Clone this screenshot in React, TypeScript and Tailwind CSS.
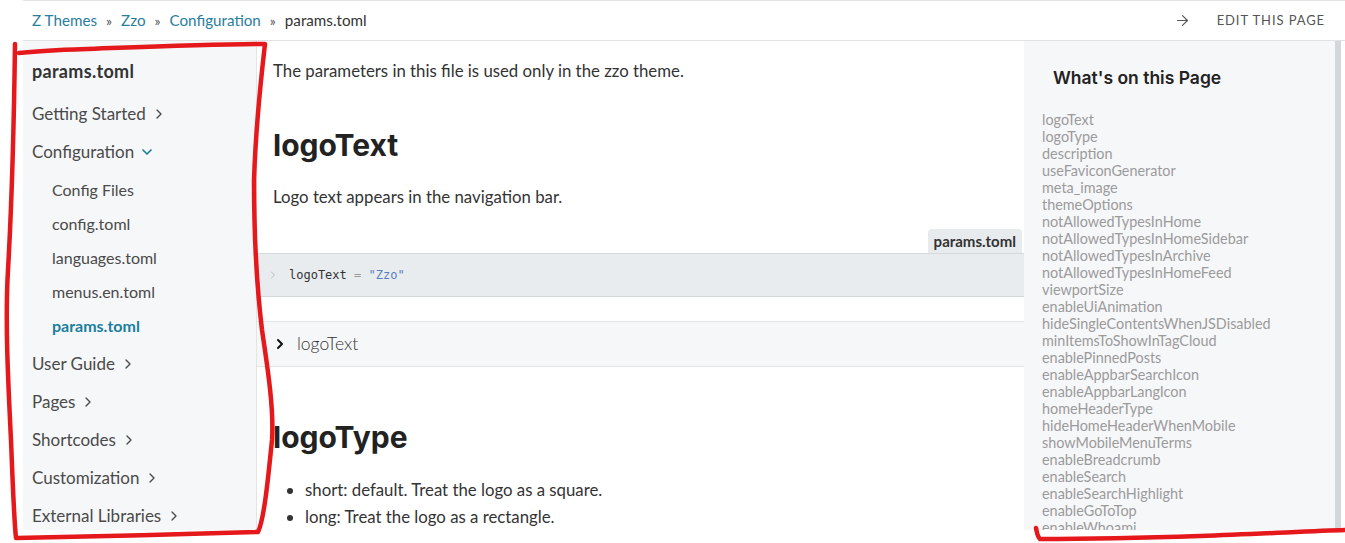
import { ArrowRight, ChevronDown, ChevronRight } from "lucide-react";

const tocItems = [
  "logoText",
  "logoType",
  "description",
  "useFaviconGenerator",
  "meta_image",
  "themeOptions",
  "notAllowedTypesInHome",
  "notAllowedTypesInHomeSidebar",
  "notAllowedTypesInArchive",
  "notAllowedTypesInHomeFeed",
  "viewportSize",
  "enableUiAnimation",
  "hideSingleContentsWhenJSDisabled",
  "minItemsToShowInTagCloud",
  "enablePinnedPosts",
  "enableAppbarSearchIcon",
  "enableAppbarLangIcon",
  "homeHeaderType",
  "hideHomeHeaderWhenMobile",
  "showMobileMenuTerms",
  "enableBreadcrumb",
  "enableSearch",
  "enableSearchHighlight",
  "enableGoToTop",
  "enableWhoami",
];

const configFiles = ["Config Files", "config.toml", "languages.toml", "menus.en.toml", "params.toml"];
const sections = ["User Guide", "Pages", "Shortcodes", "Customization", "External Libraries"];

function NavItem({ label }: { label: string }) {
  return (
    <div className="flex h-[38px] items-center gap-[5px] text-[17px] text-[#4a4a4a]">
      <span>{label}</span>
      <ChevronRight className="h-4 w-4" strokeWidth={2} />
    </div>
  );
}

export default function App() {
  return (
    <div className="relative h-[543px] w-[1345px] overflow-hidden bg-white font-['Lato',sans-serif] text-[#333]">
      <header className="ml-[23px] flex h-[41px] items-center justify-between border-y border-[#e2e2e2] pl-[9px] pr-[20px]">
        <nav className="flex items-center gap-[9px] text-[15.2px]">
          <span className="text-[#2a7d9c]">Z Themes</span>
          <span className="text-[14px] text-[#555]">»</span>
          <span className="text-[#2a7d9c]">Zzo</span>
          <span className="text-[14px] text-[#555]">»</span>
          <span className="text-[#2a7d9c]">Configuration</span>
          <span className="text-[14px] text-[#555]">»</span>
          <span className="text-[#333]">params.toml</span>
        </nav>
        <div className="flex items-center gap-[26px] text-[#555]">
          <ArrowRight className="h-[17px] w-[17px]" strokeWidth={1.6} />
          <span className="text-[13px] uppercase tracking-[0.07em]">Edit this page</span>
        </div>
      </header>

      <div className="ml-[23px] flex h-[489px]">
        <aside className="w-[234px] shrink-0 border-r border-[#e4e4e4] bg-[#f6f7f9] pl-[9px]">
          <div className="h-[54px] pt-[17px] text-[18px] font-bold tracking-[0.3px] text-[#333]">params.toml</div>
          <NavItem label="Getting Started" />
          <div className="flex h-[38px] items-center gap-[5px] text-[17px] text-[#4a4a4a]">
            <span>Configuration</span>
            <ChevronDown className="h-4 w-4 text-[#1a7f9c]" strokeWidth={2.5} />
          </div>
          <div className="my-[2px] pl-[20px]">
            {configFiles.map((file) => (
              <div
                key={file}
                className={
                  file === "params.toml"
                    ? "flex h-[34px] items-center text-[16px] font-bold text-[#1a7f9c]"
                    : "flex h-[34px] items-center text-[16px] text-[#4a4a4a]"
                }
              >
                {file}
              </div>
            ))}
          </div>
          {sections.map((s) => (
            <NavItem key={s} label={s} />
          ))}
        </aside>

        <main className="w-[767px] shrink-0 overflow-hidden">
          <p className="mt-[18px] pl-[16px] text-[16.8px] leading-6">The parameters in this file is used only in the zzo theme.</p>
          <h2 className="mt-[44px] pl-[16px] font-['Inter',sans-serif] text-[30px] font-bold leading-9 text-[#222]">logoText</h2>
          <p className="mt-[22px] pl-[16px] text-[16.8px] leading-6">Logo text appears in the navigation bar.</p>
          <div className="mt-[20px] flex justify-end pr-[2px]">
            <div className="flex h-[24px] items-center rounded-t-sm bg-[#e8ebee] px-[6px] text-[15px] font-bold text-[#333]">params.toml</div>
          </div>
          <div className="flex h-[44px] items-center gap-[10px] border-y border-[#d6d9dc] bg-[#e9ecef] pl-[10px] font-['DejaVu_Sans_Mono',monospace] text-[12px]">
            <ChevronRight className="h-3 w-3 text-[#aaa]" strokeWidth={1.5} />
            <span className="text-[#333]">
              logoText <span className="text-[#999]">=</span> <span className="text-[#5b7fc4]">"Zzo"</span>
            </span>
          </div>
          <div className="mt-[24px] flex h-[46px] items-center gap-[9px] border-y border-[#e2e4e6] bg-[#f6f7f9] pl-[15px] text-[17.5px] font-light text-[#333]">
            <ChevronRight className="h-4 w-4 text-[#111]" strokeWidth={3} />
            <span>logoText</span>
          </div>
          <h2 className="mt-[52px] pl-[16px] font-['Inter',sans-serif] text-[30px] font-bold leading-9 text-[#222]">logoType</h2>
          <ul className="mt-[23px] list-disc space-y-[3px] pl-[48px] text-[16.8px] leading-6 marker:text-[#333]">
            <li>short: default. Treat the logo as a square.</li>
            <li>long: Treat the logo as a rectangle.</li>
          </ul>
        </main>

        <aside className="w-[311px] shrink-0 overflow-hidden bg-[#f6f7f9]">
          <h3 className="pl-[29px] pt-[25px] font-['Inter',sans-serif] text-[17.5px] font-semibold leading-6 text-[#222]">What's on this Page</h3>
          <ul className="mt-[21px] pl-[18px] text-[14.4px] leading-[17px] text-[#9b9b9b]">
            {tocItems.map((t) => (
              <li key={t}>{t}</li>
            ))}
          </ul>
        </aside>
        <div className="w-[6px] shrink-0 bg-[#d3d6da]" />
      </div>

      <svg className="pointer-events-none absolute left-0 top-0" width="1345" height="543" viewBox="0 0 1345 543" fill="none">
        <path
          d="M15 44 C14 120 12 200 8 270 C5 320 8 380 11 440 C13 490 14 520 16 538 C80 537 190 534 258 532 C264 520 268 480 272 440 C274 410 268 370 262 330 C256 280 254 220 254 180 C256 120 262 70 265 44 C200 44 120 48 60 50 C40 51 28 52 19 53"
          stroke="#e5181c"
          strokeWidth="4.5"
          strokeLinecap="round"
          strokeLinejoin="round"
        />
        <path
          d="M1036 528 C1037 532 1037 536 1040 539 C1080 539 1140 538 1200 536 C1260 534 1310 531 1345 530"
          stroke="#e5181c"
          strokeWidth="4.5"
          strokeLinecap="round"
        />
      </svg>
    </div>
  );
}
